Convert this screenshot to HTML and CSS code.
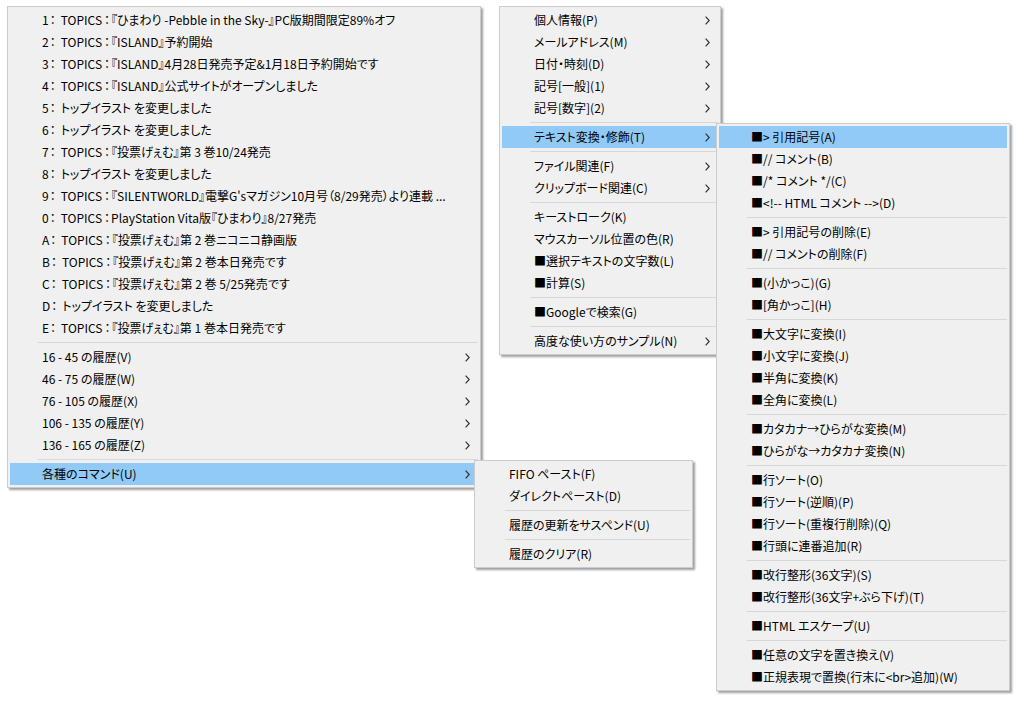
FILE: index.html
```html
<!DOCTYPE html>
<html lang="ja">
<head>
<meta charset="utf-8">
<title>Menus</title>
<link rel="stylesheet" href="styles.css">
</head>
<body>
<div class="desk">

  <div class="menu m1">
    <div class="item"><span class="label">1<span class="cn">：</span>TOPICS<span class="ct">：</span>『ひまわり -Pebble in the Sky-』PC版期間限定89%オフ</span></div>
    <div class="item"><span class="label">2<span class="cn">：</span>TOPICS<span class="ct">：</span>『ISLAND』予約開始</span></div>
    <div class="item"><span class="label">3<span class="cn">：</span>TOPICS<span class="ct">：</span>『ISLAND』4月28日発売予定&amp;1月18日予約開始です</span></div>
    <div class="item"><span class="label">4<span class="cn">：</span>TOPICS<span class="ct">：</span>『ISLAND』公式サイトがオープンしました</span></div>
    <div class="item"><span class="label">5<span class="cn">：</span>トップイラスト を変更しました</span></div>
    <div class="item"><span class="label">6<span class="cn">：</span>トップイラスト を変更しました</span></div>
    <div class="item"><span class="label">7<span class="cn">：</span>TOPICS<span class="ct">：</span>『投票げぇむ』第 3 巻10/24発売</span></div>
    <div class="item"><span class="label">8<span class="cn">：</span>トップイラスト を変更しました</span></div>
    <div class="item"><span class="label">9<span class="cn">：</span>TOPICS<span class="ct">：</span>『SILENTWORLD』電撃G'sマガジン10月号（8/29発売）より連載 ...</span></div>
    <div class="item"><span class="label">0<span class="cn">：</span>TOPICS<span class="ct">：</span>PlayStation Vita版『ひまわり』8/27発売</span></div>
    <div class="item"><span class="label">A<span class="cn">：</span>TOPICS<span class="ct">：</span>『投票げぇむ』第 2 巻ニコニコ静画版</span></div>
    <div class="item"><span class="label">B<span class="cn">：</span>TOPICS<span class="ct">：</span>『投票げぇむ』第 2 巻本日発売です</span></div>
    <div class="item"><span class="label">C<span class="cn">：</span>TOPICS<span class="ct">：</span>『投票げぇむ』第 2 巻 5/25発売です</span></div>
    <div class="item"><span class="label">D<span class="cn">：</span>トップイラスト を変更しました</span></div>
    <div class="item"><span class="label">E<span class="cn">：</span>TOPICS<span class="ct">：</span>『投票げぇむ』第 1 巻本日発売です</span></div>
    <div class="sep"></div>
    <div class="item"><span class="label">16 - 45 の履歴(V)</span><svg class="arrow" viewBox="0 0 5 9"><path d="M0.6 0.6 L4.2 4.5 L0.6 8.4"/></svg></div>
    <div class="item"><span class="label">46 - 75 の履歴(W)</span><svg class="arrow" viewBox="0 0 5 9"><path d="M0.6 0.6 L4.2 4.5 L0.6 8.4"/></svg></div>
    <div class="item"><span class="label">76 - 105 の履歴(X)</span><svg class="arrow" viewBox="0 0 5 9"><path d="M0.6 0.6 L4.2 4.5 L0.6 8.4"/></svg></div>
    <div class="item"><span class="label">106 - 135 の履歴(Y)</span><svg class="arrow" viewBox="0 0 5 9"><path d="M0.6 0.6 L4.2 4.5 L0.6 8.4"/></svg></div>
    <div class="item"><span class="label">136 - 165 の履歴(Z)</span><svg class="arrow" viewBox="0 0 5 9"><path d="M0.6 0.6 L4.2 4.5 L0.6 8.4"/></svg></div>
    <div class="sep"></div>
    <div class="item hl"><span class="label">各種のコマンド(U)</span><svg class="arrow" viewBox="0 0 5 9"><path d="M0.6 0.6 L4.2 4.5 L0.6 8.4"/></svg></div>
  </div>

  <div class="menu m3">
    <div class="item"><span class="label">FIFO ペースト(F)</span></div>
    <div class="item"><span class="label">ダイレクトペースト(D)</span></div>
    <div class="sep"></div>
    <div class="item"><span class="label">履歴の更新をサスペンド(U)</span></div>
    <div class="sep"></div>
    <div class="item"><span class="label">履歴のクリア(R)</span></div>
  </div>

  <div class="menu m2">
    <div class="item"><span class="label">個人情報(P)</span><svg class="arrow" viewBox="0 0 5 9"><path d="M0.6 0.6 L4.2 4.5 L0.6 8.4"/></svg></div>
    <div class="item"><span class="label">メールアドレス(M)</span><svg class="arrow" viewBox="0 0 5 9"><path d="M0.6 0.6 L4.2 4.5 L0.6 8.4"/></svg></div>
    <div class="item"><span class="label">日付・時刻(D)</span><svg class="arrow" viewBox="0 0 5 9"><path d="M0.6 0.6 L4.2 4.5 L0.6 8.4"/></svg></div>
    <div class="item"><span class="label">記号[一般](1)</span><svg class="arrow" viewBox="0 0 5 9"><path d="M0.6 0.6 L4.2 4.5 L0.6 8.4"/></svg></div>
    <div class="item"><span class="label">記号[数字](2)</span><svg class="arrow" viewBox="0 0 5 9"><path d="M0.6 0.6 L4.2 4.5 L0.6 8.4"/></svg></div>
    <div class="sep"></div>
    <div class="item hl"><span class="label">テキスト変換・修飾(T)</span><svg class="arrow" viewBox="0 0 5 9"><path d="M0.6 0.6 L4.2 4.5 L0.6 8.4"/></svg></div>
    <div class="sep"></div>
    <div class="item"><span class="label">ファイル関連(F)</span><svg class="arrow" viewBox="0 0 5 9"><path d="M0.6 0.6 L4.2 4.5 L0.6 8.4"/></svg></div>
    <div class="item"><span class="label">クリップボード関連(C)</span><svg class="arrow" viewBox="0 0 5 9"><path d="M0.6 0.6 L4.2 4.5 L0.6 8.4"/></svg></div>
    <div class="sep"></div>
    <div class="item"><span class="label">キーストローク(K)</span></div>
    <div class="item"><span class="label">マウスカーソル位置の色(R)</span></div>
    <div class="item"><span class="label">■選択テキストの文字数(L)</span></div>
    <div class="item"><span class="label">■計算(S)</span></div>
    <div class="sep"></div>
    <div class="item"><span class="label">■Googleで検索(G)</span></div>
    <div class="sep"></div>
    <div class="item"><span class="label">高度な使い方のサンプル(N)</span><svg class="arrow" viewBox="0 0 5 9"><path d="M0.6 0.6 L4.2 4.5 L0.6 8.4"/></svg></div>
  </div>

  <div class="menu m4">
    <div class="item hl"><span class="label">■&gt; 引用記号(A)</span></div>
    <div class="item"><span class="label">■// コメント(B)</span></div>
    <div class="item"><span class="label">■/* コメント */(C)</span></div>
    <div class="item"><span class="label">■&lt;!-- HTML コメント --&gt;(D)</span></div>
    <div class="sep"></div>
    <div class="item"><span class="label">■&gt; 引用記号の削除(E)</span></div>
    <div class="item"><span class="label">■// コメントの削除(F)</span></div>
    <div class="sep"></div>
    <div class="item"><span class="label">■(小かっこ)(G)</span></div>
    <div class="item"><span class="label">■[角かっこ](H)</span></div>
    <div class="sep"></div>
    <div class="item"><span class="label">■大文字に変換(I)</span></div>
    <div class="item"><span class="label">■小文字に変換(J)</span></div>
    <div class="item"><span class="label">■半角に変換(K)</span></div>
    <div class="item"><span class="label">■全角に変換(L)</span></div>
    <div class="sep"></div>
    <div class="item"><span class="label">■カタカナ→ひらがな変換(M)</span></div>
    <div class="item"><span class="label">■ひらがな→カタカナ変換(N)</span></div>
    <div class="sep"></div>
    <div class="item"><span class="label">■行ソート(O)</span></div>
    <div class="item"><span class="label">■行ソート(逆順)(P)</span></div>
    <div class="item"><span class="label">■行ソート(重複行削除)(Q)</span></div>
    <div class="item"><span class="label">■行頭に連番追加(R)</span></div>
    <div class="sep"></div>
    <div class="item"><span class="label">■改行整形(36文字)(S)</span></div>
    <div class="item"><span class="label">■改行整形(36文字+ぶら下げ)(T)</span></div>
    <div class="sep"></div>
    <div class="item"><span class="label">■HTML エスケープ(U)</span></div>
    <div class="sep"></div>
    <div class="item"><span class="label">■任意の文字を置き換え(V)</span></div>
    <div class="item"><span class="label">■正規表現で置換(行末に&lt;br&gt;追加)(W)</span></div>
  </div>

</div>
</body>
</html>
```

FILE: styles.css
```css
* { box-sizing: border-box; }

html, body {
  margin: 0;
  padding: 0;
  background: #ffffff;
}

body {
  font-family: "Noto Sans CJK JP", "Noto Sans", sans-serif;
  font-size: 12px;
  color: #000;
  font-feature-settings: "palt" 1;
}

.desk {
  position: relative;
  width: 1024px;
  height: 702px;
  overflow: hidden;
}

.menu {
  position: absolute;
  display: flex;
  flex-direction: column;
  background: #f0f0f0;
  border: 1px solid #cccccc;
  padding: 2px;
  box-shadow: 2px 2px 2px rgba(0, 0, 0, 0.38);
}

.m1 { left: 7px;   top: 6px;   width: 474px; z-index: 1; }
.m3 { left: 474px; top: 460px; width: 219px; z-index: 2; }
.m2 { left: 499px; top: 6px;   width: 222px; z-index: 3; }
.m4 { left: 716px; top: 123px; width: 294px; z-index: 4; }

.item {
  height: 22px;
  display: flex;
  align-items: center;
  padding: 0 8px 0 32px;
  white-space: nowrap;
  overflow: hidden;
}

.item.hl {
  background: #91c9f7;
}

.label {
  flex: 1 1 auto;
  overflow: hidden;
  line-height: 22px;
}

.cn {
  margin: 0 5px 0 1px;
}

.ct {
  margin: 0 1px 0 2px;
}

.arrow {
  flex: none;
  width: 5px;
  height: 9px;
  margin-left: 8px;
}

.arrow path {
  fill: none;
  stroke: #333333;
  stroke-width: 1.2;
}

.sep {
  height: 7px;
  display: flex;
  align-items: center;
  padding-left: 28px;
}

.sep::before {
  content: "";
  display: block;
  flex: 1;
  height: 1px;
  background: #d7d7d7;
}
```
